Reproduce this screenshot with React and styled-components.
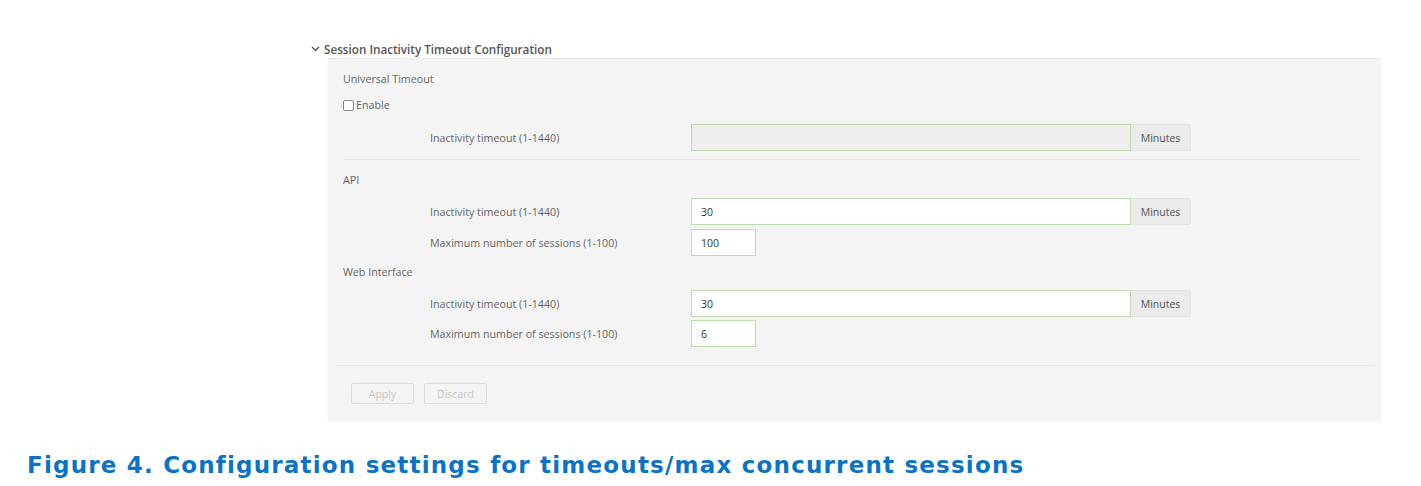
import React from "react";
import styled, { createGlobalStyle } from "styled-components";

const Global = createGlobalStyle`
  html, body { margin: 0; padding: 0; background: #ffffff; }
  body { font-family: "Open Sans", Roboto, "Liberation Sans", sans-serif; }
`;

const Page = styled.div`
  width: 1421px;
  height: 486px;
  padding-top: 40px;
  box-sizing: border-box;
  display: flex;
  flex-direction: column;
`;

const Section = styled.section`
  margin-left: 311px;
  width: 1070px;
  display: flex;
  flex-direction: column;
`;

const Header = styled.div`
  display: flex;
  align-items: center;
  height: 18px;
  gap: 4px;
  font-size: 11.7px;
  font-weight: 600;
  color: #555;
`;

const Panel = styled.div`
  margin-left: 17px;
  background: #f4f4f4;
  border-top: 1px solid #ebebeb;
  box-shadow: 0 1px 2px rgba(0, 0, 0, 0.05);
  display: flex;
  flex-direction: column;
  padding: 12px 21px 16px 15px;
`;

const GroupTitle = styled.div`
  height: 16px;
  line-height: 16px;
  font-size: 10.7px;
  color: #666;
  margin-top: ${(p) => p.$mt || 0}px;
`;

const CheckRow = styled.label`
  display: flex;
  align-items: center;
  gap: 2px;
  height: 16px;
  margin-top: 10px;
  font-size: 10.7px;
  color: #666;
`;

const Box = styled.span`
  width: 9px;
  height: 9px;
  border: 1px solid #8a8a8a;
  border-radius: 2px;
  background: #fff;
`;

const FieldRow = styled.div`
  display: flex;
  align-items: center;
  height: 27px;
  margin-top: ${(p) => p.$mt || 0}px;
  padding-left: 87px;
`;

const Label = styled.div`
  width: 261px;
  font-size: 10.7px;
  color: #666;
`;

const Input = styled.div`
  width: ${(p) => p.$w}px;
  height: 27px;
  box-sizing: border-box;
  border: 1px solid #bddcae;
  background: ${(p) => (p.$disabled ? "#efefef" : "#ffffff")};
  font-size: 10.5px;
  color: #333;
  display: flex;
  align-items: center;
  padding-left: 9px;
`;

const Addon = styled.div`
  width: 60px;
  height: 27px;
  box-sizing: border-box;
  background: #ebebeb;
  border: 1px solid #e3e3e3;
  border-left: none;
  border-radius: 0 2px 2px 0;
  display: flex;
  align-items: center;
  justify-content: center;
  font-size: 10.5px;
  color: #555;
`;

const Divider = styled.div`
  height: 1px;
  background: #e6e6e6;
  margin-top: ${(p) => p.$mt || 0}px;
  margin-left: ${(p) => p.$ml || 0}px;
  margin-right: ${(p) => p.$mr || 0}px;
`;

const Buttons = styled.div`
  display: flex;
  gap: 10px;
  margin-top: 17px;
  padding-left: 8px;
`;

const Button = styled.div`
  width: 63px;
  height: 21px;
  box-sizing: border-box;
  border: 1px solid #dcdcdc;
  border-radius: 2px;
  background: #f4f4f4;
  display: flex;
  align-items: center;
  justify-content: center;
  font-size: 10.5px;
  color: #c6c6c6;
`;

const Caption = styled.div`
  margin-top: 31px;
  margin-left: 27px;
  font-family: "DejaVu Sans", Roboto, sans-serif;
  font-weight: 700;
  font-size: 23px;
  letter-spacing: 1.2px;
  color: #0b72c6;
  line-height: 28px;
  white-space: nowrap;
`;

const Chevron = () => (
  <svg width="9" height="6" viewBox="0 0 9 6">
    <polyline points="1,1 4.5,4.5 8,1" fill="none" stroke="#555" strokeWidth="1.4" />
  </svg>
);

const Field = ({ label, value, width = 440, addon, disabled, mt }) => (
  <FieldRow $mt={mt}>
    <Label>{label}</Label>
    <Input $w={width} $disabled={disabled}>{value}</Input>
    {addon && <Addon>{addon}</Addon>}
  </FieldRow>
);

export default function App() {
  return (
    <>
      <Global />
      <Page>
        <Section>
          <Header>
            <Chevron />
            <span>Session Inactivity Timeout Configuration</span>
          </Header>
          <Panel>
            <GroupTitle>Universal Timeout</GroupTitle>
            <CheckRow>
              <Box />
              Enable
            </CheckRow>
            <Field mt={11} label="Inactivity timeout (1-1440)" value="" addon="Minutes" disabled />
            <Divider $mt={8} />
            <GroupTitle $mt={12}>API</GroupTitle>
            <Field mt={10} label="Inactivity timeout (1-1440)" value="30" addon="Minutes" />
            <Field mt={4} label="Maximum number of sessions (1-100)" value="100" width={65} />
            <GroupTitle $mt={8}>Web Interface</GroupTitle>
            <Field mt={10} label="Inactivity timeout (1-1440)" value="30" addon="Minutes" />
            <Field mt={3} label="Maximum number of sessions (1-100)" value="6" width={65} />
            <Divider $mt={18} $ml={-8} $mr={-15} />
            <Buttons>
              <Button>Apply</Button>
              <Button>Discard</Button>
            </Buttons>
          </Panel>
        </Section>
        <Caption>Figure 4. Configuration settings for timeouts/max concurrent sessions</Caption>
      </Page>
    </>
  );
}
